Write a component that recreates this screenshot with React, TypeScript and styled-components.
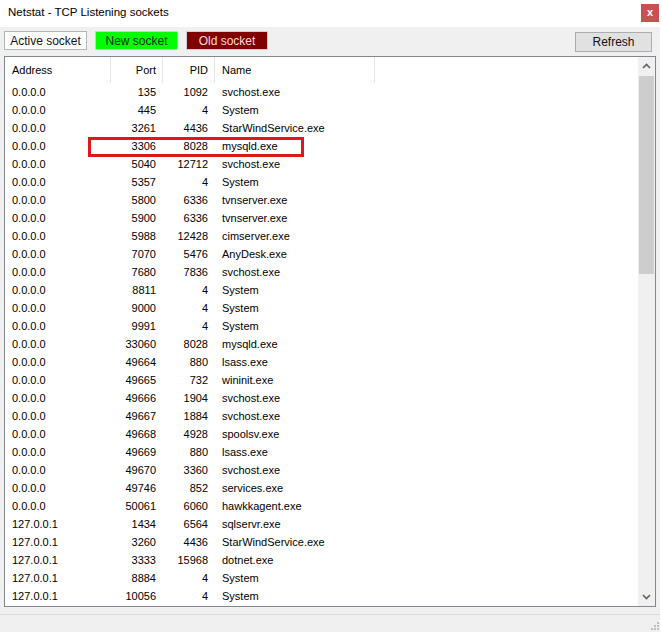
import React from 'react';
import styled, { createGlobalStyle } from 'styled-components';

const GlobalStyle = createGlobalStyle`
  html, body {
    margin: 0;
    padding: 0;
    background: #ffffff;
  }
  body {
    font-family: "Liberation Sans", Arial, sans-serif;
    color: #000;
  }
  * {
    box-sizing: border-box;
  }
`;

const Window = styled.div`
  width: 660px;
  height: 632px;
  display: flex;
  flex-direction: column;
  background: #f0f0f0;
  overflow: hidden;
`;

const TitleBar = styled.div`
  height: 27px;
  flex: none;
  display: flex;
  align-items: flex-start;
  justify-content: space-between;
  background: #ffffff;
  padding: 0 1px 0 8px;
`;

const Title = styled.span`
  font-size: 11.5px;
  line-height: 25px;
`;

const CloseButton = styled.div`
  width: 18px;
  height: 18px;
  margin-top: 4px;
  background: #c75050;
  color: #ffffff;
  font-size: 11px;
  font-weight: bold;
  line-height: 16px;
  text-align: center;
`;

const Toolbar = styled.div`
  height: 29px;
  flex: none;
  display: flex;
  align-items: flex-start;
  gap: 8px;
  padding: 4px 8px 0 4px;
`;

type Tone = 'active' | 'new' | 'old';

const tones: Record<Tone, { bg: string; fg: string; border: string }> = {
  active: { bg: '#ffffff', fg: '#111111', border: '#b4b4b4' },
  new: { bg: '#00ff00', fg: '#0a2a0a', border: '#cfcfcf' },
  old: { bg: '#800000', fg: '#f6dede', border: '#cfcfcf' },
};

const Legend = styled.div<{ $tone: Tone; $w: number }>`
  width: ${p => p.$w}px;
  height: 19px;
  display: flex;
  align-items: center;
  justify-content: center;
  font-size: 12px;
  background: ${p => tones[p.$tone].bg};
  color: ${p => tones[p.$tone].fg};
  border: 1px solid ${p => tones[p.$tone].border};
`;

const RefreshButton = styled.button`
  margin-left: auto;
  margin-top: 1px;
  width: 77px;
  height: 20px;
  padding: 0;
  font-family: inherit;
  font-size: 12px;
  color: #111;
  background: #e1e1e1;
  border: 1px solid #adadad;
`;

const ListFrame = styled.div`
  height: 551px;
  flex: none;
  margin: 0 4px;
  display: flex;
  background: #ffffff;
  border: 1px solid #828790;
`;

const ListBody = styled.div`
  flex: 1;
  display: flex;
  flex-direction: column;
  overflow: hidden;
`;

const columns = '106px 52px 52px 160px';

const HeaderRow = styled.div`
  height: 26px;
  flex: none;
  display: grid;
  grid-template-columns: ${columns};
  font-size: 11px;
`;

const HeaderCell = styled.div<{ $right?: boolean }>`
  display: flex;
  align-items: center;
  justify-content: ${p => (p.$right ? 'flex-end' : 'flex-start')};
  padding: ${p => (p.$right ? '0 6px 0 0' : '0 0 0 7px')};
  border-right: 1px solid #e5e5e5;
`;

const Row = styled.div`
  position: relative;
  height: 18px;
  flex: none;
  display: grid;
  grid-template-columns: ${columns};
  font-size: 11px;
  line-height: 18px;
`;

const Cell = styled.div<{ $right?: boolean }>`
  white-space: nowrap;
  text-align: ${p => (p.$right ? 'right' : 'left')};
  padding: ${p => (p.$right ? '0 7px 0 0' : '0 0 0 7px')};
`;

const Highlight = styled.div`
  position: absolute;
  left: 83px;
  top: 0;
  width: 216px;
  height: 20px;
  border: 3px solid #e0161b;
  pointer-events: none;
`;

const ScrollBar = styled.div`
  width: 17px;
  flex: none;
  display: flex;
  flex-direction: column;
  background: #f0f0f0;
`;

const ScrollArrow = styled.div`
  height: 18px;
  flex: none;
  display: flex;
  align-items: center;
  justify-content: center;
`;

const Thumb = styled.div`
  height: 198px;
  flex: none;
  margin: 1px 1px 0;
  background: #cdcdcd;
`;

const Track = styled.div`
  flex: 1;
`;

const StatusBar = styled.div`
  flex: 1;
  margin-top: 7px;
  display: flex;
  justify-content: flex-end;
  align-items: flex-end;
  border-top: 1px solid #dadada;
  padding: 0 1px 2px 0;
`;

type Socket = [string, number, number, string];

const sockets: Socket[] = [
  ['0.0.0.0', 135, 1092, 'svchost.exe'],
  ['0.0.0.0', 445, 4, 'System'],
  ['0.0.0.0', 3261, 4436, 'StarWindService.exe'],
  ['0.0.0.0', 3306, 8028, 'mysqld.exe'],
  ['0.0.0.0', 5040, 12712, 'svchost.exe'],
  ['0.0.0.0', 5357, 4, 'System'],
  ['0.0.0.0', 5800, 6336, 'tvnserver.exe'],
  ['0.0.0.0', 5900, 6336, 'tvnserver.exe'],
  ['0.0.0.0', 5988, 12428, 'cimserver.exe'],
  ['0.0.0.0', 7070, 5476, 'AnyDesk.exe'],
  ['0.0.0.0', 7680, 7836, 'svchost.exe'],
  ['0.0.0.0', 8811, 4, 'System'],
  ['0.0.0.0', 9000, 4, 'System'],
  ['0.0.0.0', 9991, 4, 'System'],
  ['0.0.0.0', 33060, 8028, 'mysqld.exe'],
  ['0.0.0.0', 49664, 880, 'lsass.exe'],
  ['0.0.0.0', 49665, 732, 'wininit.exe'],
  ['0.0.0.0', 49666, 1904, 'svchost.exe'],
  ['0.0.0.0', 49667, 1884, 'svchost.exe'],
  ['0.0.0.0', 49668, 4928, 'spoolsv.exe'],
  ['0.0.0.0', 49669, 880, 'lsass.exe'],
  ['0.0.0.0', 49670, 3360, 'svchost.exe'],
  ['0.0.0.0', 49746, 852, 'services.exe'],
  ['0.0.0.0', 50061, 6060, 'hawkkagent.exe'],
  ['127.0.0.1', 1434, 6564, 'sqlservr.exe'],
  ['127.0.0.1', 3260, 4436, 'StarWindService.exe'],
  ['127.0.0.1', 3333, 15968, 'dotnet.exe'],
  ['127.0.0.1', 8884, 4, 'System'],
  ['127.0.0.1', 10056, 4, 'System'],
];

const Chevron = ({ up }: { up?: boolean }) => (
  <svg width="9" height="6" viewBox="0 0 9 6">
    <path
      d={up ? 'M1 5 L4.5 1.5 L8 5' : 'M1 1 L4.5 4.5 L8 1'}
      fill="none"
      stroke="#606060"
      strokeWidth="1.6"
    />
  </svg>
);

const Grip = () => (
  <svg width="10" height="10" viewBox="0 0 10 10">
    {[[8, 2], [8, 5], [5, 5], [8, 8], [5, 8], [2, 8]].map(([x, y]) => (
      <rect key={`${x}-${y}`} x={x} y={y} width="2" height="2" fill="#bdbdbd" />
    ))}
  </svg>
);

export default function App() {
  return (
    <>
      <GlobalStyle />
      <Window>
        <TitleBar>
          <Title>Netstat - TCP Listening sockets</Title>
          <CloseButton>x</CloseButton>
        </TitleBar>
        <Toolbar>
          <Legend $tone="active" $w={83}>Active socket</Legend>
          <Legend $tone="new" $w={83}>New socket</Legend>
          <Legend $tone="old" $w={82}>Old socket</Legend>
          <RefreshButton>Refresh</RefreshButton>
        </Toolbar>
        <ListFrame>
          <ListBody>
            <HeaderRow>
              <HeaderCell>Address</HeaderCell>
              <HeaderCell $right>Port</HeaderCell>
              <HeaderCell $right>PID</HeaderCell>
              <HeaderCell>Name</HeaderCell>
            </HeaderRow>
            {sockets.map(([addr, port, pid, name], i) => (
              <Row key={`${addr}:${port}`}>
                <Cell>{addr}</Cell>
                <Cell $right>{port}</Cell>
                <Cell $right>{pid}</Cell>
                <Cell>{name}</Cell>
                {i === 3 && <Highlight />}
              </Row>
            ))}
          </ListBody>
          <ScrollBar>
            <ScrollArrow><Chevron up /></ScrollArrow>
            <Thumb />
            <Track />
            <ScrollArrow><Chevron /></ScrollArrow>
          </ScrollBar>
        </ListFrame>
        <StatusBar>
          <Grip />
        </StatusBar>
      </Window>
    </>
  );
}
